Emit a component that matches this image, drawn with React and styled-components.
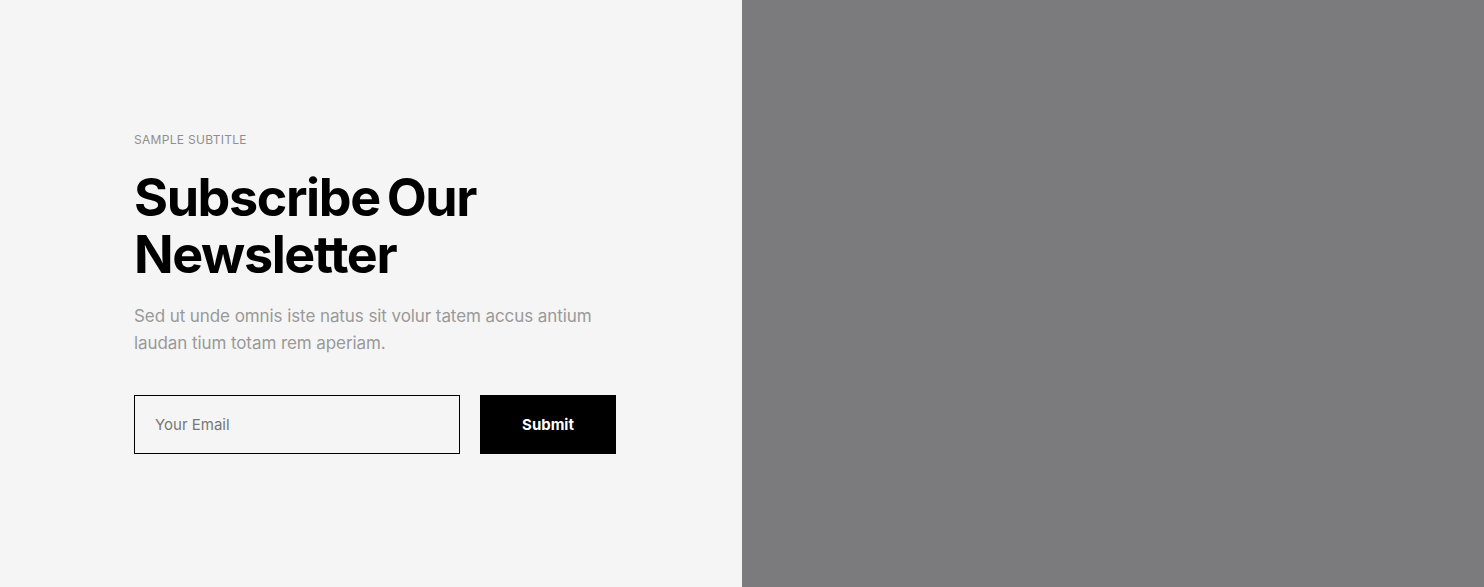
import React from "react";
import styled, { createGlobalStyle } from "styled-components";

const GlobalStyle = createGlobalStyle`
  html, body {
    margin: 0;
    padding: 0;
  }
  body {
    font-family: Inter, "Noto Sans", sans-serif;
  }
`;

const App = () => {
  return (
    <>
      <GlobalStyle />
      <Wrapper>
        <TextSide>
          <Content>
            <Subtitle>Sample Subtitle</Subtitle>
            <Title>
              Subscribe Our
              <br />
              Newsletter
            </Title>
            <Description>
              Sed ut unde omnis iste natus sit volur tatem accus antium
              laudan tium totam rem aperiam.
            </Description>
            <Form onSubmit={(e) => e.preventDefault()}>
              <EmailInput type="email" placeholder="Your Email" />
              <SubmitButton type="submit">Submit</SubmitButton>
            </Form>
          </Content>
        </TextSide>
        <ImageSide />
      </Wrapper>
    </>
  );
};

const Wrapper = styled.div`
  display: flex;
  height: 100vh;
  width: 100%;
`;

const TextSide = styled.div`
  flex: 0 0 50%;
  background: #f5f5f5;
  display: flex;
  align-items: center;
  padding-left: 134px;
  box-sizing: border-box;
`;

const Content = styled.div`
  display: flex;
  flex-direction: column;
`;

const Subtitle = styled.span`
  font-size: 12px;
  text-transform: uppercase;
  color: #8f8f8f;
  line-height: 14px;
  letter-spacing: 0.3px;
`;

const Title = styled.h2`
  margin: 22px 0 0;
  font-size: 52px;
  font-weight: 700;
  line-height: 57px;
  letter-spacing: -1.4px;
  word-spacing: -4px;
  color: #000;
`;

const Description = styled.p`
  margin: 20px 0 0;
  max-width: 480px;
  font-size: 17px;
  line-height: 27px;
  color: #999;
  letter-spacing: -0.08px;
`;

const Form = styled.form`
  display: flex;
  gap: 20px;
  margin-top: 38px;
`;

const EmailInput = styled.input`
  width: 326px;
  height: 59px;
  box-sizing: border-box;
  border: 1px solid #000;
  background: transparent;
  padding: 0 20px;
  font-family: Inter, "Noto Sans", sans-serif;
  font-size: 15px;
  outline: none;
  &::placeholder {
    color: #777;
  }
`;

const SubmitButton = styled.button`
  width: 136px;
  height: 59px;
  border: none;
  background: #000;
  color: #fff;
  font-family: Inter, "Noto Sans", sans-serif;
  font-size: 15px;
  font-weight: 700;
  cursor: pointer;
`;

const ImageSide = styled.div`
  flex: 1;
  background: #7b7b7d;
`;

export default App;
